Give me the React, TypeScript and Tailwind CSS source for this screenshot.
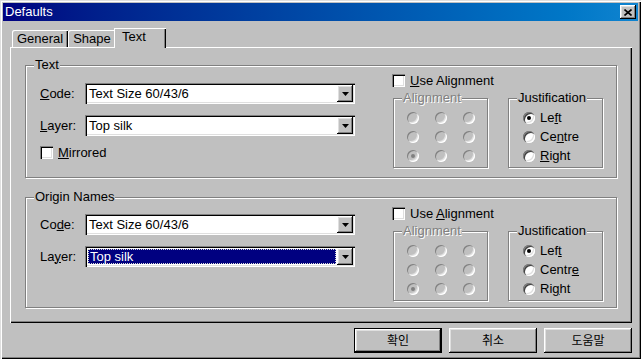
const FONT = "font-['Liberation_Sans','Noto_Sans_CJK_KR',sans-serif]"

const RAISED =
  'shadow-[inset_-1px_-1px_0_#000,inset_1px_1px_0_#fff,inset_-2px_-2px_0_#808080,inset_2px_2px_0_#dfdfdf]'
const SUNKEN =
  'shadow-[inset_1px_1px_0_#808080,inset_2px_2px_0_#000,inset_-1px_-1px_0_#fff,inset_-2px_-2px_0_#dfdfdf]'
const ETCHED = 'border border-[#808080] shadow-[1px_1px_0_#fff,inset_1px_1px_0_#fff]'

function Key({ children }: { children: string }) {
  return <span className="underline decoration-1 underline-offset-[1px]">{children}</span>
}

function Combo({ value, selected = false }: { value: string; selected?: boolean }) {
  return (
    <div className={`flex h-[21px] w-[270px] bg-white p-[2px] ${SUNKEN}`}>
      <div className="flex min-w-0 flex-1 items-center">
        {selected ? (
          <div className="m-[1px] flex h-[15px] flex-1 items-center border border-dotted border-[#d8d8d8] bg-[#000080] pl-[1px] text-white">
            {value}
          </div>
        ) : (
          <span className="pl-[2px]">{value}</span>
        )}
      </div>
      <div className={`flex h-[17px] w-[16px] items-center justify-center bg-[#c0c0c0] ${RAISED}`}>
        <svg width="7" height="4" viewBox="0 0 7 4">
          <path d="M0 0h7L3.5 4z" fill="#000" />
        </svg>
      </div>
    </div>
  )
}

function Checkbox() {
  return <span className={`inline-block h-[13px] w-[13px] shrink-0 bg-white ${SUNKEN}`} />
}

function Radio({ checked = false, disabled = false }: { checked?: boolean; disabled?: boolean }) {
  return (
    <span
      className={[
        'relative inline-block h-[12px] w-[12px] shrink-0 rounded-full',
        disabled
          ? 'bg-[#c0c0c0] shadow-[inset_1px_1px_0_#808080,inset_-1px_-1px_0_#fff,inset_-2px_-2px_0_#dfdfdf]'
          : 'bg-white shadow-[inset_1px_1px_0_#808080,inset_2px_2px_0_#404040,inset_-1px_-1px_0_#fff,inset_-2px_-2px_0_#dfdfdf]',
      ].join(' ')}
    >
      {checked && (
        <span
          className={[
            'absolute left-[4px] top-[4px] h-[4px] w-[4px] rounded-full',
            disabled ? 'bg-[#808080]' : 'bg-black',
          ].join(' ')}
        />
      )}
    </span>
  )
}

function GroupLabel({ children, disabled = false }: { children: React.ReactNode; disabled?: boolean }) {
  return (
    <span
      className={[
        'absolute left-[8px] top-[-8px] bg-[#c0c0c0] px-[1px] leading-[14px]',
        disabled ? 'text-[#808080] [text-shadow:1px_1px_0_#fff]' : '',
      ].join(' ')}
    >
      {children}
    </span>
  )
}

interface SectionKeys {
  code: [string, string, string]
  layer: [string, string, string]
  use: [string, string, string]
  left: [string, string, string]
  centre: [string, string, string]
  right: [string, string, string]
}

function KeyText({ parts }: { parts: [string, string, string] }) {
  return (
    <span>
      {parts[0]}
      <Key>{parts[1]}</Key>
      {parts[2]}
    </span>
  )
}

function Section({
  title,
  keys,
  height,
  top,
  layerSelected,
  mirrored,
}: {
  title: string
  keys: SectionKeys
  height: string
  top: string
  layerSelected?: boolean
  mirrored?: boolean
}) {
  return (
    <div className={`relative flex shrink-0 ${height} ${ETCHED}`}>
      <GroupLabel>{title}</GroupLabel>

      <div className={`ml-[14px] flex w-[315px] flex-col ${top === 'a' ? 'mt-[17px]' : 'mt-[16px]'}`}>
        <div className="flex h-[21px] items-center">
          <span className="w-[45px]">
            <KeyText parts={keys.code} />
          </span>
          <Combo value="Text Size 60/43/6" />
        </div>
        <div className="mt-[11px] flex h-[21px] items-center">
          <span className="w-[45px]">
            <KeyText parts={keys.layer} />
          </span>
          <Combo value="Top silk" selected={layerSelected} />
        </div>
        {mirrored && (
          <div className="mt-[10px] flex h-[13px] items-center gap-[5px]">
            <Checkbox />
            <span>
              <Key>M</Key>irrored
            </span>
          </div>
        )}
      </div>

      <div className={`ml-[37px] flex flex-col ${top === 'a' ? 'mt-[8px]' : 'mt-[9px]'}`}>
        <div className="flex h-[13px] items-center gap-[5px]">
          <Checkbox />
          <KeyText parts={keys.use} />
        </div>
        <div className="mt-[11px] flex gap-[20px]">
          <div className={`relative ml-[1px] h-[70px] w-[95px] ${ETCHED}`}>
            <GroupLabel disabled>Alignment</GroupLabel>
            <div className="ml-[13px] mt-[13px] grid grid-cols-[12px_12px_12px] gap-x-[16px] gap-y-[7px]">
              {Array.from({ length: 9 }).map((_, i) => (
                <Radio key={i} disabled checked={i === 6} />
              ))}
            </div>
          </div>
          <div className={`relative h-[70px] w-[95px] ${ETCHED}`}>
            <GroupLabel>Justification</GroupLabel>
            <div className="ml-[14px] mt-[13px] flex flex-col gap-[7px]">
              {[keys.left, keys.centre, keys.right].map((parts, i) => (
                <div key={i} className="flex h-[12px] items-center gap-[5px]">
                  <Radio checked={i === 0} />
                  <KeyText parts={parts} />
                </div>
              ))}
            </div>
          </div>
        </div>
      </div>
    </div>
  )
}

function Button({ label, primary = false }: { label: string; primary?: boolean }) {
  return (
    <button
      type="button"
      className={[
        'flex h-[25px] w-[88px] items-center justify-center bg-[#c0c0c0] text-[12px]',
        primary
          ? 'border border-black shadow-[inset_-1px_-1px_0_#000,inset_1px_1px_0_#fff,inset_-2px_-2px_0_#808080,inset_2px_2px_0_#dfdfdf]'
          : RAISED,
      ].join(' ')}
    >
      {label}
    </button>
  )
}

export default function App() {
  return (
    <div
      className={`flex h-[359px] w-[641px] flex-col overflow-hidden bg-[#c0c0c0] p-[3px] text-[13px] leading-[14px] text-black ${FONT} shadow-[inset_1px_1px_0_#dfdfdf,inset_2px_2px_0_#fff,inset_-1px_-1px_0_#000,inset_-2px_-2px_0_#808080]`}
    >
      <div className="flex h-[18px] shrink-0 items-center justify-between bg-gradient-to-r from-[#000080] to-[#1084d0] pl-[2px] pr-[2px]">
        <span className="text-white">Defaults</span>
        <div className={`flex h-[14px] w-[16px] items-center justify-center bg-[#c0c0c0] ${RAISED}`}>
          <svg width="8" height="7" viewBox="0 0 8 7">
            <path d="M0.5 0.5L7.5 6.5M7.5 0.5L0.5 6.5" stroke="#000" strokeWidth="1.6" />
          </svg>
        </div>
      </div>

      <div className="relative z-10 ml-[9px] mt-[7px] flex h-[19px] shrink-0 items-end">
        <div className="flex h-[17px] w-[56px] items-center justify-center rounded-tl-[2px] shadow-[inset_1px_1px_0_#fff,inset_-1px_0_0_#000,inset_-2px_0_0_#808080]">
          General
        </div>
        <div className="flex h-[17px] w-[48px] items-center justify-center rounded-tl-[2px] shadow-[inset_1px_1px_0_#fff,inset_-1px_0_0_#000,inset_-2px_0_0_#808080]">
          Shape
        </div>
        <div className="-mb-px -ml-[2px] flex h-[20px] w-[52px] items-start bg-[#c0c0c0] pl-[8px] pt-[2px] shadow-[inset_1px_1px_0_#fff,inset_-1px_0_0_#000,inset_-2px_0_0_#808080]">
          Text
        </div>
      </div>

      <div className="ml-[7px] flex h-[276px] w-[622px] shrink-0 flex-col gap-[19px] px-[15px] pt-[18px] shadow-[inset_1px_1px_0_#fff,inset_-1px_-1px_0_#000,inset_-2px_-2px_0_#808080]">
        <Section
          title="Text"
          height="h-[113px]"
          top="a"
          mirrored
          keys={{
            code: ['', 'C', 'ode:'],
            layer: ['', 'L', 'ayer:'],
            use: ['', 'U', 'se Alignment'],
            left: ['Le', 'f', 't'],
            centre: ['Ce', 'n', 'tre'],
            right: ['', 'R', 'ight'],
          }}
        />
        <Section
          title="Origin Names"
          height="h-[111px]"
          top="b"
          layerSelected
          keys={{
            code: ['Co', 'd', 'e:'],
            layer: ['La', 'y', 'er:'],
            use: ['Use ', 'A', 'lignment'],
            left: ['Lef', 't', ''],
            centre: ['Centr', 'e', ''],
            right: ['Ri', 'g', 'ht'],
          }}
        />
      </div>

      <div className="mt-[5px] flex justify-end gap-[7px] pr-[6px]">
        <Button label="확인" primary />
        <Button label="취소" />
        <Button label="도움말" />
      </div>
    </div>
  )
}
